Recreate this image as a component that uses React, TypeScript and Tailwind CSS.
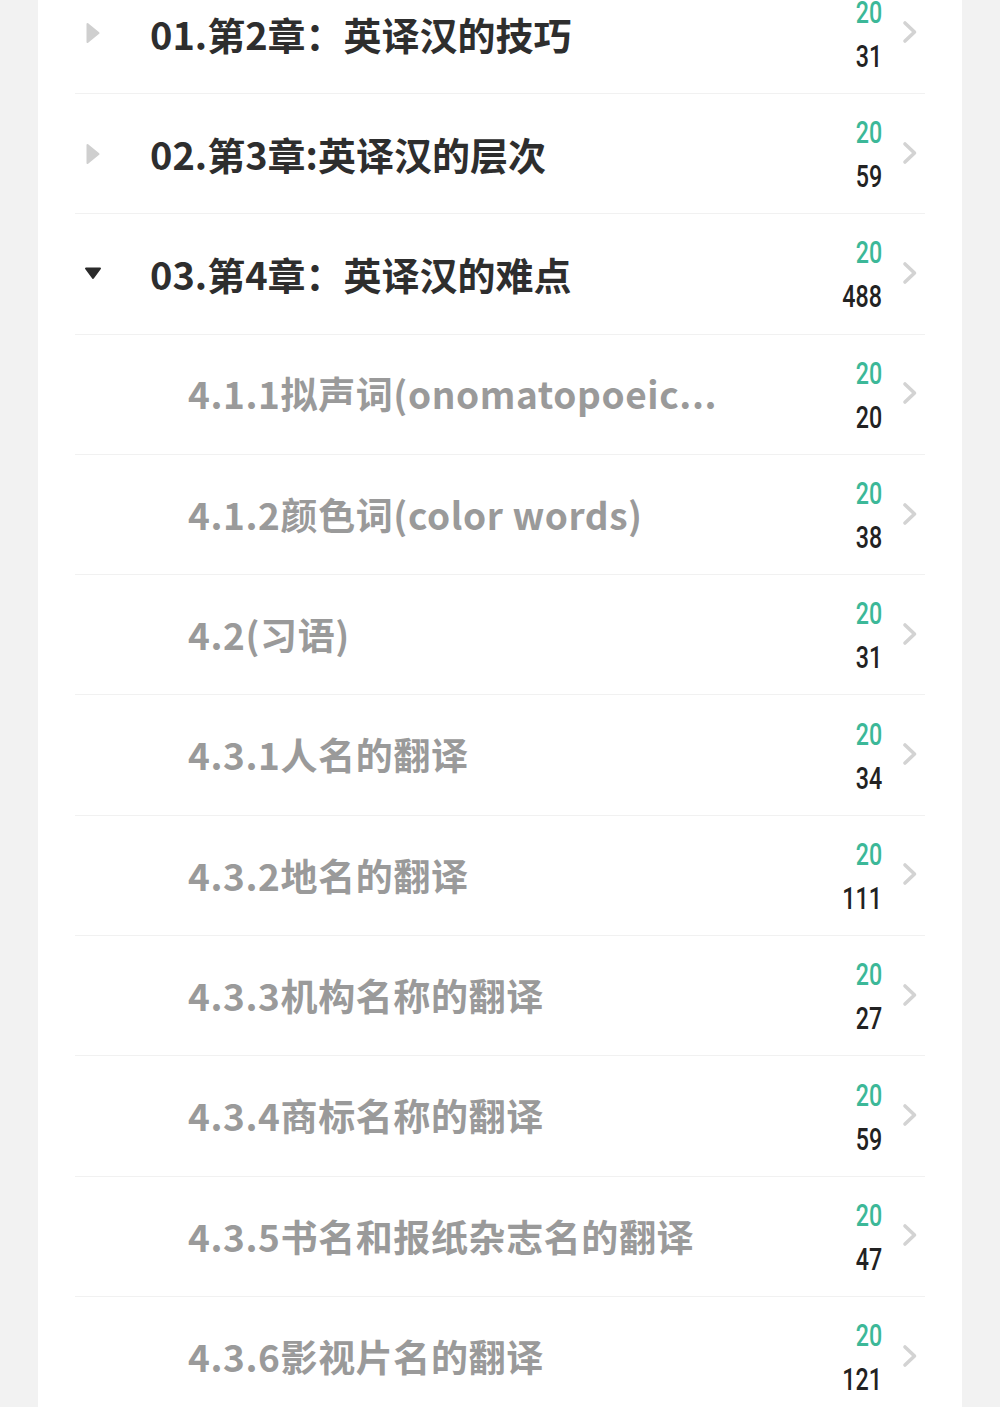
type Item = {
  title: string;
  total: number;
  kind: "chapter" | "open" | "sub";
};

const items: Item[] = [
  { title: "01.第2章：英译汉的技巧", total: 31, kind: "chapter" },
  { title: "02.第3章:英译汉的层次", total: 59, kind: "chapter" },
  { title: "03.第4章：英译汉的难点", total: 488, kind: "open" },
  { title: "4.1.1拟声词(onomatopoeic...", total: 20, kind: "sub" },
  { title: "4.1.2颜色词(color words)", total: 38, kind: "sub" },
  { title: "4.2(习语)", total: 31, kind: "sub" },
  { title: "4.3.1人名的翻译", total: 34, kind: "sub" },
  { title: "4.3.2地名的翻译", total: 111, kind: "sub" },
  { title: "4.3.3机构名称的翻译", total: 27, kind: "sub" },
  { title: "4.3.4商标名称的翻译", total: 59, kind: "sub" },
  { title: "4.3.5书名和报纸杂志名的翻译", total: 47, kind: "sub" },
  { title: "4.3.6影视片名的翻译", total: 121, kind: "sub" },
];

// small triangle toggles, drawn since the icon sets are too sharp
const Caret = ({ open }: { open: boolean }) =>
  open ? (
    <svg width="20" height="14" viewBox="0 0 20 14" className="mt-[-2px]">
      <path d="M3 2.5 L17 2.5 L10 12 Z" fill="#2b2b2b" stroke="#2b2b2b" strokeWidth="2" strokeLinejoin="round" />
    </svg>
  ) : (
    <svg width="16" height="22" viewBox="0 0 16 22">
      <path d="M2.5 2 L13.5 11 L2.5 20 Z" fill="#cfcfcf" stroke="#cfcfcf" strokeWidth="2" strokeLinejoin="round" />
    </svg>
  );

const Chevron = () => (
  <svg width="18" height="24" viewBox="0 0 18 24" className="mt-[-2px]">
    <path d="M4 3 L13.5 12 L4 21" fill="none" stroke="#d3d3d3" strokeWidth="3.6" strokeLinecap="round" strokeLinejoin="round" />
  </svg>
);

const cjk = { fontFamily: '"Noto Sans CJK SC", "Noto Sans", sans-serif' };
const narrow = { fontFamily: 'Roboto, "Liberation Sans", sans-serif' };

function Row({ item }: { item: Item }) {
  const sub = item.kind === "sub";
  return (
    <div className="h-[120.3px] flex items-center border-b border-[#f1f1f1]">
      <div className="w-[36px] shrink-0 flex justify-center">
        {!sub && <Caret open={item.kind === "open"} />}
      </div>
      <div
        className={
          sub
            ? "ml-[77px] whitespace-nowrap text-[37px] font-bold text-[#9a9a9a] tracking-[0.6px]"
            : "ml-[39px] whitespace-nowrap text-[38px] font-bold text-[#2e2e2e]"
        }
        style={cjk}
      >
        {item.title}
      </div>
      <div className="flex-1" />
      <div className="flex flex-col items-end mt-[3px] leading-[44px] text-[31px]" style={narrow}>
        <span className="inline-block origin-right scale-x-[0.75] text-[#3cb898] font-medium">20</span>
        <span className="inline-block origin-right scale-x-[0.75] text-[#222222] font-medium">{item.total}</span>
      </div>
      <div className="w-[37px] mr-[6px] shrink-0 flex justify-end">
        <Chevron />
      </div>
    </div>
  );
}

export default function App() {
  return (
    <div className="w-[1000px] h-[1407px] overflow-hidden bg-[#f2f2f2]">
      <div className="mx-[38px] h-full bg-white flex flex-col">
        <div className="-mt-[26.3px] px-[37px]">
          {items.map((it) => (
            <Row key={it.title} item={it} />
          ))}
        </div>
      </div>
    </div>
  );
}
